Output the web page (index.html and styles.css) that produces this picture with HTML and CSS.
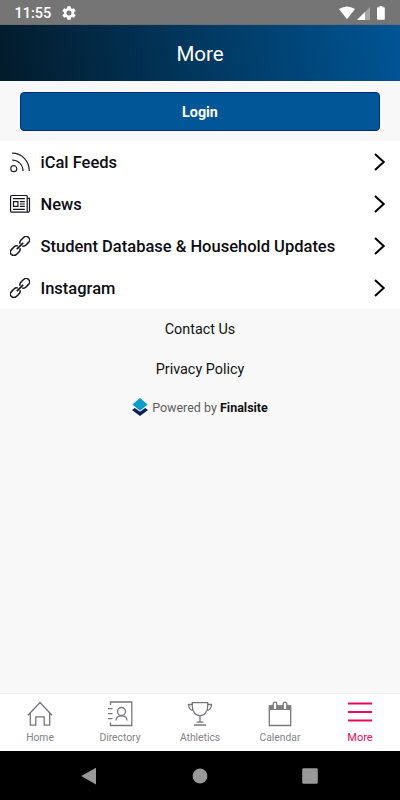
FILE: index.html
```html
<!DOCTYPE html>
<html lang="en">
<head>
<meta charset="utf-8">
<title>More</title>
<link rel="stylesheet" href="styles.css">
</head>
<body>
<svg class="defs" width="0" height="0">
  <symbol id="chevron" viewBox="0 0 12 18"><path d="M1 1 9.700 9 1 17" fill="none" stroke="#000" stroke-width="2"/></symbol>
  <symbol id="link" viewBox="0 0 20 20">
    <g transform="rotate(-45 10 10)" fill="none" stroke="#15151c" stroke-width="1.500">
      <path d="M8.300 11.400Q7.700 13.500 5 13.500H1.400A3.500 3.500 0 0 1 1.400 6.500H5Q7.700 6.500 8.300 8.600"/>
      <path d="M11.700 8.600Q12.300 6.500 15 6.500H18.600A3.500 3.500 0 0 1 18.600 13.500H15Q12.300 13.500 11.700 11.400"/>
      <path d="M5.500 10H14.500" stroke-width="1.700"/>
    </g>
  </symbol>
</svg>
<div class="screen">
  <div class="status">
    <span class="time">11:55</span>
    <svg class="gear" width="14" height="14" viewBox="2 2 20 20"><path fill="#fff" d="M19.14 12.94c.04-.3.06-.61.06-.94s-.02-.64-.07-.94l2.03-1.58a.49.49 0 0 0 .12-.61l-1.92-3.32a.49.49 0 0 0-.59-.22l-2.39.96a7 7 0 0 0-1.62-.94l-.36-2.54a.48.48 0 0 0-.48-.41h-3.84a.47.47 0 0 0-.47.41l-.36 2.54c-.59.24-1.13.57-1.62.94l-2.39-.96a.48.48 0 0 0-.59.22L2.74 8.87a.48.48 0 0 0 .12.61l2.03 1.58a6 6 0 0 0 0 1.88l-2.03 1.58a.49.49 0 0 0-.12.61l1.92 3.32c.12.22.37.29.59.22l2.39-.96c.5.38 1.03.7 1.62.94l.36 2.54c.05.24.24.41.48.41h3.84c.24 0 .44-.17.47-.41l.36-2.54c.59-.24 1.13-.56 1.62-.94l2.39.96c.22.08.47 0 .59-.22l1.92-3.32a.48.48 0 0 0-.12-.61zM12 15.6a3.6 3.6 0 1 1 0-7.2 3.6 3.6 0 0 1 0 7.2z"/></svg>
    <svg class="signals" width="48" height="14" viewBox="0 0 48 14">
      <path fill="#fff" d="M1 3Q9-2.200 17 3L9 13.200z"/>
      <path fill="#fff" fill-opacity=".35" d="M32 1v13H19z"/>
      <path fill="#fff" d="M27 6v8H19z"/>
      <path fill="#fff" d="M41.500 0h3v1.300h1.500a.8.8 0 0 1 .8.800V13a.8.8 0 0 1-.8.800h-6.200a.8.8 0 0 1-.8-.8V2.100a.8.8 0 0 1 .8-.8h1.700z"/>
    </svg>
  </div>
  <header class="header">More</header>
  <div class="login-area"><div class="login">Login</div></div>
  <main class="list">
    <div class="row">
      <svg class="icon" viewBox="0 0 20 20" fill="none" stroke="#222" stroke-width="1.200"><circle cx="3.800" cy="16.700" r="3"/><path d="M2 8C8 8 13 12.500 13 19M2 1.200C12 1.200 19.300 9 19.300 19"/></svg>
      <span>iCal Feeds</span><svg class="chevron"><use href="#chevron"/></svg>
    </div>
    <div class="row">
      <svg class="icon" viewBox="0 0 20 20" fill="none" stroke="#15151c" stroke-width="1.200"><path d="M17 1.500H1.800Q.6 1.500.6 2.700V16.900Q.6 18.200 1.800 18.200H18.200Q19.500 18.200 19.500 17V4.300H17.400M17.200 1.500V16.500Q17.200 18 18.300 18M3 4.700H14.800M3 15.300H14.800M9.800 7.600H14.800M9.800 10H14.800M9.800 12.400H14.800M3.500 7.600H7.900V12.300H3.500z"/></svg>
      <span>News</span><svg class="chevron"><use href="#chevron"/></svg>
    </div>
    <div class="row">
      <svg class="icon"><use href="#link"/></svg>
      <span>Student Database &amp; Household Updates</span><svg class="chevron"><use href="#chevron"/></svg>
    </div>
    <div class="row">
      <svg class="icon"><use href="#link"/></svg>
      <span>Instagram</span><svg class="chevron"><use href="#chevron"/></svg>
    </div>
  </main>
  <footer class="footer">
    <div class="flink">Contact Us</div>
    <div class="flink">Privacy Policy</div>
    <div class="powered">
      <svg width="16" height="18" viewBox="0 0 16 18"><path fill="#0d2150" d="M0 12 2.800 10 8 13.800 13.200 10 16 12 8 18z"/><path fill="#0c9cc8" d="M8 0 15.600 6.500 8 12.700.4 6.500z"/></svg>
      <span>Powered by <b>Finalsite</b></span>
    </div>
  </footer>
  <nav class="tabs">
    <div class="tab">
      <svg viewBox="0 0 26 26"><path d="M1 14.300 13 1.500 25 14.300M3.300 12V24.200H8.800V15.800H17.200V24.200H22.700V12"/></svg>
      <span>Home</span>
    </div>
    <div class="tab">
      <svg viewBox="0 0 26 26"><path d="M3.500 4V1H24.800V24.500H3.500V21.500M1 7.700H5.500M1 12.700H5.500M1 17.700H5.500M9 19.500C9.300 13.300 19.700 13.300 20 19.500"/><circle cx="14.500" cy="10.500" r="4"/></svg>
      <span>Directory</span>
    </div>
    <div class="tab">
      <svg viewBox="0 0 26 26"><path d="M5.300 1.700H20.700V5C20.700 11.500 17 14.700 13 14.700S5.300 11.500 5.300 5zM5.300 3.500H1.500C1.500 7.500 3.500 9.300 6.500 9.300M20.700 3.500H24.500C24.500 7.500 22.500 9.300 19.500 9.300M13 14.700V21M9.500 21.200H16.500M7 24H19"/></svg>
      <span>Athletics</span>
    </div>
    <div class="tab">
      <svg viewBox="0 0 26 26"><path d="M2.300 5H23.700V24.500H2.300z"/><path class="solid" d="M2 4.300H24V9H2z"/><path class="ring" d="M6.200 8V3a1.800 1.800 0 0 1 3.600 0V8M16.200 8V3a1.800 1.800 0 0 1 3.600 0V8"/></svg>
      <span>Calendar</span>
    </div>
    <div class="tab active">
      <svg viewBox="0 0 26 26"><path d="M1 2.500H25M1 11H25M1 19.500H25"/></svg>
      <span>More</span>
    </div>
  </nav>
  <div class="system">
    <svg width="16" height="18" viewBox="0 0 16 18"><path d="M14 .8v16.600L-.8 9z"/></svg>
    <svg width="16" height="16" viewBox="0 0 16 16"><circle cx="8" cy="8" r="7.400"/></svg>
    <svg width="16" height="16" viewBox="0 0 16 16"><rect x=".2" y=".2" width="15.600" height="15.600" rx="1.300"/></svg>
  </div>
</div>
</body>
</html>
```
FILE: styles.css
```css
* { box-sizing: border-box; }
body { margin: 0; font-family: Roboto, sans-serif; }
svg { display: block; flex: none; overflow: visible; }
.defs { position: absolute; }
.screen {
  width: 400px;
  height: 800px;
  display: flex;
  flex-direction: column;
  background: #f8f8f8;
  overflow: hidden;
}
.status {
  height: 25px;
  background: #757575;
  color: #fff;
  display: flex;
  align-items: center;
  padding: 1px 14px 0 14.500px;
  border-bottom: 1px solid #696e73;
}
.time { font-size: 14.500px; font-weight: 500; line-height: 22px; width: 47.500px; padding-top: 2px; }
.signals { margin-left: auto; }
.header {
  height: 56px;
  display: flex;
  align-items: center;
  justify-content: center;
  padding-top: 2px;
  color: #fff;
  font-size: 20.500px;
  background: linear-gradient(80deg, #031b2b, #005595);
}
.login-area { height: 60px; padding: 11px 20px 0; }
.login {
  height: 39px;
  background: #005696;
  border: 1px solid #002b80;
  border-radius: 4px;
  color: #fff;
  font-size: 14.300px;
  font-weight: 700;
  line-height: 38px;
  text-align: center;
}
.list { background: #fff; }
.row {
  height: 42px;
  display: flex;
  align-items: center;
  padding: 0 14.500px 1px 10px;
  color: #0c0c12;
  font-size: 16.500px;
  font-weight: 500;
}
.row span { margin-left: 10.500px; padding-top: 2px; white-space: nowrap; }
.icon { width: 20px; height: 20px; }
.chevron { width: 12px; height: 18px; margin-left: auto; }
.footer {
  flex: 1;
  display: flex;
  flex-direction: column;
  align-items: center;
  padding-top: 1px;
  color: #111;
}
.flink { height: 40px; font-size: 14.400px; line-height: 40px; }
.powered {
  height: 20px;
  margin-top: 7px;
  display: flex;
  align-items: center;
  gap: 4px;
  color: #5d5d61;
  font-size: 12.500px;
}
.powered b { color: #111115; font-weight: 700; }
.tabs {
  height: 58px;
  display: flex;
  background: #fff;
  border-top: 1px solid #ededed;
}
.tab {
  width: 80px;
  display: flex;
  flex-direction: column;
  align-items: center;
  padding-top: 7px;
  color: #838387;
  font-size: 10.300px;
}
.tab svg { width: 26px; height: 26px; fill: none; stroke: #77777b; stroke-width: 1.300; }
.tab .solid { fill: #808084; stroke: none; }
.tab .ring { fill: #fff; }
.tab span { line-height: 14px; margin-top: 4px; }
.tab.active { color: #ee0958; }
.tab.active svg { stroke: #ee0958; stroke-width: 1.800; }
.tab.active span { font-size: 11px; }
.system {
  height: 49px;
  background: #000;
  display: flex;
  align-items: center;
  justify-content: center;
  gap: 94px;
}
.system svg { fill: #999; }
```
